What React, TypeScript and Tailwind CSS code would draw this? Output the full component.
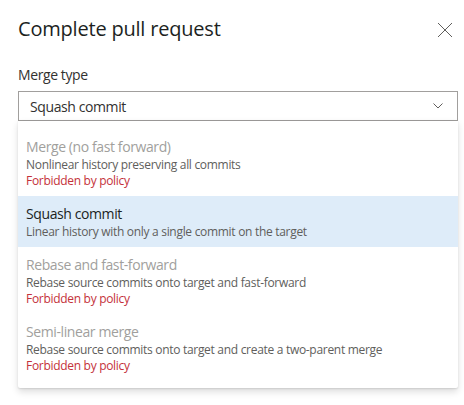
import React from 'react'

interface MergeOption {
  id: string
  title: string
  description: string
  forbidden: boolean
}

const OPTIONS: MergeOption[] = [
  { id: 'noff', title: 'Merge (no fast forward)', description: 'Nonlinear history preserving all commits', forbidden: true },
  { id: 'squash', title: 'Squash commit', description: 'Linear history with only a single commit on the target', forbidden: false },
  { id: 'rebase', title: 'Rebase and fast-forward', description: 'Rebase source commits onto target and fast-forward', forbidden: true },
  { id: 'semi', title: 'Semi-linear merge', description: 'Rebase source commits onto target and create a two-parent merge', forbidden: true },
]

const FONT = "font-['Segoe_UI','Open_Sans',sans-serif]"

export default function App(): React.ReactElement {
  const selectedId = 'squash'

  return (
    <div className={`w-[464px] h-[405px] bg-white pl-[18px] pr-[6px] ${FONT} text-[#323130] overflow-hidden`}>
      <div className="flex justify-between pt-[15px]">
        <h1 className="text-[20px] leading-[28px] font-normal text-[#201f1e] tracking-[-0.2px]">
          Complete pull request
        </h1>
        <svg className="mt-[7px] mr-[5px] text-[#605e5c]" width="16" height="16" viewBox="0 0 16 16" fill="none">
          <path d="M1 1L15 15M15 1L1 15" stroke="currentColor" strokeWidth="1" />
        </svg>
      </div>

      <div className="mt-[22px] text-[14px] leading-[20px] tracking-[-0.4px] text-[#323130]">Merge type</div>

      <div className="mt-[6px] h-[30px] border border-[#a19f9d] flex items-center justify-between pl-[11px] pr-[14px] text-[14px] tracking-[-0.4px] text-[#323130]">
        <span>Squash commit</span>
        <svg width="10" height="6" viewBox="0 0 10 6" fill="none" className="text-[#605e5c]">
          <path d="M0.5 0.5L5 5L9.5 0.5" stroke="currentColor" strokeWidth="1" />
        </svg>
      </div>

      <div className="pt-2 pb-[7px] bg-white shadow-[0_3.2px_7.2px_rgba(0,0,0,0.13),0_0.6px_1.8px_rgba(0,0,0,0.11)] rounded-b-[2px]">
        {OPTIONS.map((o) => {
          const isSelected = o.id === selectedId
          return (
            <div key={o.id} className={`px-2 pt-2 pb-[7px] ${isSelected ? 'bg-[#deecf9]' : ''}`}>
              <div className={`text-[14px] leading-[20px] tracking-[-0.4px] ${o.forbidden ? 'text-[#a19f9d]' : 'text-[#201f1e]'}`}>
                {o.title}
              </div>
              <div className="text-[12px] leading-[16px] tracking-[-0.3px] text-[#605e5c]">{o.description}</div>
              {o.forbidden && (
                <div className="text-[12px] leading-[16px] tracking-[-0.3px] text-[#c4313a]">Forbidden by policy</div>
              )}
            </div>
          )
        })}
      </div>
    </div>
  )
}
